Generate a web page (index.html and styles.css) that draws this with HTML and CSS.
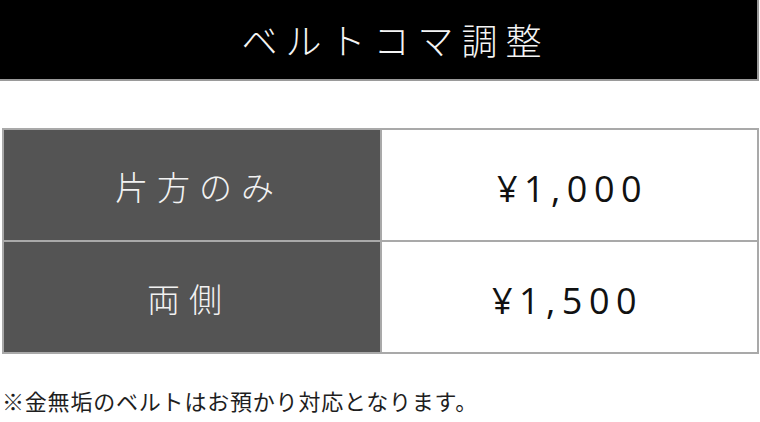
FILE: index.html
```html
<!DOCTYPE html>
<html lang="ja">
<head>
<meta charset="utf-8">
<link rel="stylesheet" href="styles.css">
</head>
<body>
<div class="page">
  <h1 class="title">ベルトコマ調整</h1>
  <div class="price-table">
    <div class="cell label label-first">片方のみ</div>
    <div class="cell price">¥1,000</div>
    <div class="cell label">両側</div>
    <div class="cell price price-second">¥1,500</div>
  </div>
  <p class="note">※金無垢のベルトはお預かり対応となります。</p>
</div>
</body>
</html>
```
FILE: styles.css
```css
html, body {
  margin: 0;
  padding: 0;
  background: #ffffff;
}
.page {
  width: 760px;
  font-family: "Noto Sans CJK JP", "Noto Sans", sans-serif;
}
.title {
  margin: 0;
  box-sizing: border-box;
  width: 759px;
  height: 81px;
  background: #000000;
  border-right: 2px solid #9a9a9a;
  border-bottom: 2px solid #9a9a9a;
  color: #f4f4f4;
  font-size: 36px;
  font-weight: 300;
  letter-spacing: 8px;
  line-height: 79px;
  text-align: center;
  padding-left: 34px;
}
.price-table {
  margin: 47px 0 0 2px;
  width: 757px;
  box-sizing: border-box;
  display: grid;
  grid-template-columns: 376px 1fr;
  grid-template-rows: 110px 110px;
  gap: 2px;
  padding: 2px;
  background: #a9a9a9;
}
.cell {
  display: flex;
  align-items: center;
  justify-content: center;
}
.label {
  background: #545454;
  color: #f2f2f2;
  font-size: 33px;
  font-weight: 300;
  letter-spacing: 9px;
  padding-left: 0;
  padding-right: 6px;
  padding-top: 2px;
}
.label-first {
  padding-left: 14px;
  padding-right: 0;
}
.price {
  background: #ffffff;
  color: #111111;
  font-family: "Open Sans", "Noto Sans", sans-serif;
  font-size: 36px;
  letter-spacing: 6.5px;
  padding-left: 6px;
  padding-top: 6px;
}
.price-second {
  padding-left: 0;
  padding-right: 4px;
}
.note {
  margin: 30px 0 0 2px;
  font-size: 22px;
  line-height: 32px;
  color: #1e1e1e;
  letter-spacing: 0.8px;
}
```
